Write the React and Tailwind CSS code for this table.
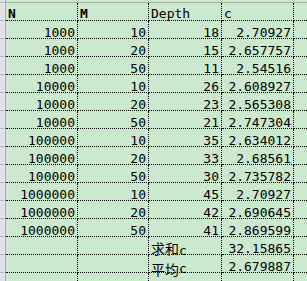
import React from "react";

const rows = [
  ["1000", "10", "18", "2.70927"],
  ["1000", "20", "15", "2.657757"],
  ["1000", "50", "11", "2.54516"],
  ["10000", "10", "26", "2.608927"],
  ["10000", "20", "23", "2.565308"],
  ["10000", "50", "21", "2.747304"],
  ["100000", "10", "35", "2.634012"],
  ["100000", "20", "33", "2.68561"],
  ["100000", "50", "30", "2.735782"],
  ["1000000", "10", "45", "2.70927"],
  ["1000000", "20", "42", "2.690645"],
  ["1000000", "50", "41", "2.869599"],
];

const mono = { fontFamily: '"DejaVu Sans Mono", "Liberation Mono", monospace' };
const cjk = { fontFamily: '"Noto Sans CJK SC", sans-serif' };

const widths = ["w-[72px]", "w-[71px]", "w-[73px]", "w-[72px]"];

function Strip({ h, line = "border-b" }) {
  return (
    <div
      className={`w-[6px] shrink-0 box-border bg-[#dfe2e6] border-r border-r-[#a9adb2] ${line} border-b-[#b6babf] ${h}`}
    />
  );
}

function Row({ cells, header }) {
  return (
    <div className="flex h-[18px]">
      <Strip h="h-[18px]" />
      {cells.map((c, i) => {
        const isNum = !header && typeof c === "string" && c !== "" && /^[0-9.]+$/.test(c);
        const bold = header && (c === "N" || c === "M") ? "font-bold" : "";
        const cls = `${widths[i]} shrink-0 box-border h-[18px] border-r border-b border-dotted border-black text-[13px] leading-[14px] text-black whitespace-nowrap ${
          header ? "pt-[4px] pl-[1px] text-left" : "pt-[5px]"
        } ${isNum ? "text-right pr-[2px]" : "pl-[2px]"} ${bold}`;
        return (
          <div key={i} className={cls} style={mono}>
            {c}
          </div>
        );
      })}
      <div className="flex-1 box-border h-[18px] border-b border-dotted border-black" />
    </div>
  );
}

function Label({ zh, shift }) {
  return (
    <>
      <span className={`relative inline-block h-[14px] text-[14px] leading-[14px] ${shift}`} style={cjk}>
        {zh}
      </span>
      <span>c</span>
    </>
  );
}

export default function App() {
  return (
    <div className="w-[307px] h-[281px] overflow-hidden bg-[#cce8cf]">
      <div className="flex h-[3px]">
        <Strip h="h-[3px]" />
        <div className="flex-1 box-border h-[3px] border-b border-[#a8aca8]" />
      </div>
      <Row header cells={["N", "M", "Depth", "c"]} />
      {rows.map((r, i) => (
        <Row key={i} cells={r} />
      ))}
      <Row cells={["", "", <Label key="a" zh="求和" shift="-top-[1px]" />, "32.15865"]} />
      <Row cells={["", "", <Label key="b" zh="平均" shift="top-[1.5px]" />, "2.679887"]} />
      <div className="flex h-[8px]">
        <Strip h="h-[8px]" line="" />
        {widths.map((w, i) => (
          <div key={i} className={`${w} shrink-0 box-border h-[8px] border-r border-dotted border-black`} />
        ))}
        <div className="flex-1" />
      </div>
    </div>
  );
}
